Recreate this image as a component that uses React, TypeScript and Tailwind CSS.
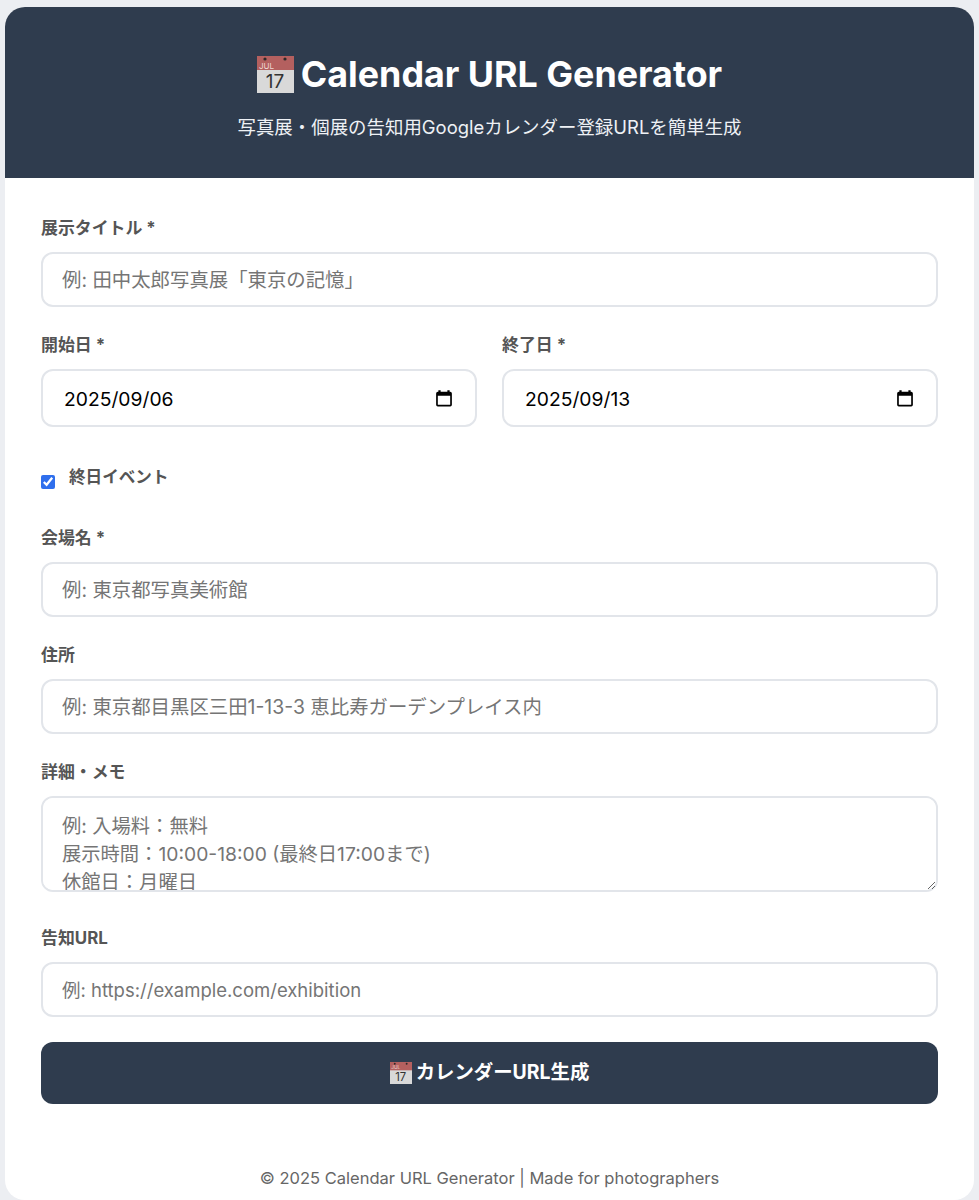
import React from 'react';

const CalendarEmoji: React.FC<{ className: string }> = ({ className }) => (
  <svg viewBox="0 0 37 37" className={className} aria-hidden="true">
    <rect x="0" y="0" width="37" height="37" fill="#d9d9d9" />
    <rect x="0" y="0" width="37" height="14" fill="#b4605f" />
    <circle cx="8" cy="3" r="1.6" fill="#2f2a2a" />
    <circle cx="28" cy="3" r="1.6" fill="#2f2a2a" />
    <text x="2" y="12.5" fontSize="8" fontWeight="400" fill="#eed7d4" fontFamily="Inter, sans-serif">JUL</text>
    <text x="18" y="32" fontSize="19" fontWeight="400" textAnchor="middle" fill="#333" fontFamily="Inter, sans-serif">17</text>
  </svg>
);

const CalendarPicker: React.FC = () => (
  <svg viewBox="0 0 16 16" className="w-[18px] h-[18px] shrink-0" aria-hidden="true">
    <path
      fill="#000"
      d="M3 1h2v1.5h6V1h2v1.5h.5A1.5 1.5 0 0 1 15 4v10a1.5 1.5 0 0 1-1.5 1.5h-11A1.5 1.5 0 0 1 1 14V4a1.5 1.5 0 0 1 1.5-1.5H3V1zm-.5 5v8h11V6h-11z"
    />
  </svg>
);

const labelClass = 'block text-[16.9px] leading-[28px] font-bold text-[#555] mb-[10px]';
const inputClass =
  'block w-full h-[55px] px-[19px] text-black bg-white border-2 border-[#e2e5ea] rounded-[12px] outline-none placeholder:text-[#757575]';

const Field: React.FC<{ label: string; placeholder: string; size?: string }> = ({
  label,
  placeholder,
  size = 'text-[19.4px]',
}) => (
  <div className="mb-[24px]">
    <label className={labelClass}>{label}</label>
    <input type="text" placeholder={placeholder} className={`${inputClass} ${size}`} />
  </div>
);

const DateField: React.FC<{ label: string; value: string }> = ({ label, value }) => (
  <div>
    <label className={labelClass}>{label}</label>
    <div className="flex items-center h-[58px] pl-[21px] pr-[22px] bg-white border-2 border-[#e2e5ea] rounded-[12px]">
      <input
        type="text"
        readOnly
        value={value}
        className="flex-1 min-w-0 pt-[2px] text-[19.3px] text-black bg-transparent outline-none"
      />
      <CalendarPicker />
    </div>
  </div>
);

const App: React.FC = () => {
  return (
    <div className="h-[1200px] overflow-hidden bg-[#eceef2] px-[5px] pt-[7px] font-['Inter','Noto_Sans_CJK_JP',sans-serif]">
      <div className="h-[1193px] bg-white rounded-[20px] overflow-hidden">
        {/* Header */}
        <header className="h-[171px] bg-[#2f3c4e] text-white text-center pt-[42px]">
          <h1 className="flex items-center justify-center gap-[7px] text-[35.8px] leading-[50px] font-bold">
            <CalendarEmoji className="w-[37px] h-[37px]" />
            <span>Calendar URL Generator</span>
          </h1>
          <p className="mt-[15px] text-[18.45px] leading-[26px] text-[#eef1f5]">
            写真展・個展の告知用Googleカレンダー登録URLを簡単生成
          </p>
        </header>

        {/* Form */}
        <form className="px-[36px] pt-[36px]">
          <Field label="展示タイトル *" placeholder="例: 田中太郎写真展「東京の記憶」" />

          <div className="grid grid-cols-2 gap-[25px] mb-[24px]">
            <DateField label="開始日 *" value="2025/09/06" />
            <DateField label="終了日 *" value="2025/09/13" />
          </div>

          <div className="flex items-start gap-[14px] h-[49px] mb-[24px] pt-[14px]">
            <input type="checkbox" defaultChecked className="w-[14px] h-[14px] mt-[10px] accent-[#2f6fed]" />
            <label className="text-[16.6px] leading-[24px] font-bold text-[#555]">終日イベント</label>
          </div>

          <Field label="会場名 *" placeholder="例: 東京都写真美術館" />
          <Field label="住所" placeholder="例: 東京都目黒区三田1-13-3 恵比寿ガーデンプレイス内" />

          <div className="mb-[32px]">
            <label className={labelClass}>詳細・メモ</label>
            <textarea
              placeholder={'例: 入場料：無料\n展示時間：10:00-18:00 (最終日17:00まで)\n休館日：月曜日'}
              className="block w-full h-[96px] px-[19px] py-[14px] text-[19.3px] leading-[28px] bg-white border-2 border-[#e2e5ea] rounded-[12px] outline-none placeholder:text-[#757575]"
            />
          </div>

          <Field label="告知URL" placeholder="例: https://example.com/exhibition" size="text-[18.5px]" />

          <button
            type="button"
            className="flex items-center justify-center gap-[4px] w-full h-[62px] mt-[25px] bg-[#2f3c4e] text-white text-[19.4px] font-bold rounded-[12px]"
          >
            <CalendarEmoji className="w-[22px] h-[22px]" />
            <span>カレンダーURL生成</span>
          </button>
        </form>

        <footer className="mt-[62px] text-center text-[16.5px] leading-[24px] text-[#666]">
          © 2025 Calendar URL Generator | Made for photographers
        </footer>
      </div>
    </div>
  );
};

export default App;
